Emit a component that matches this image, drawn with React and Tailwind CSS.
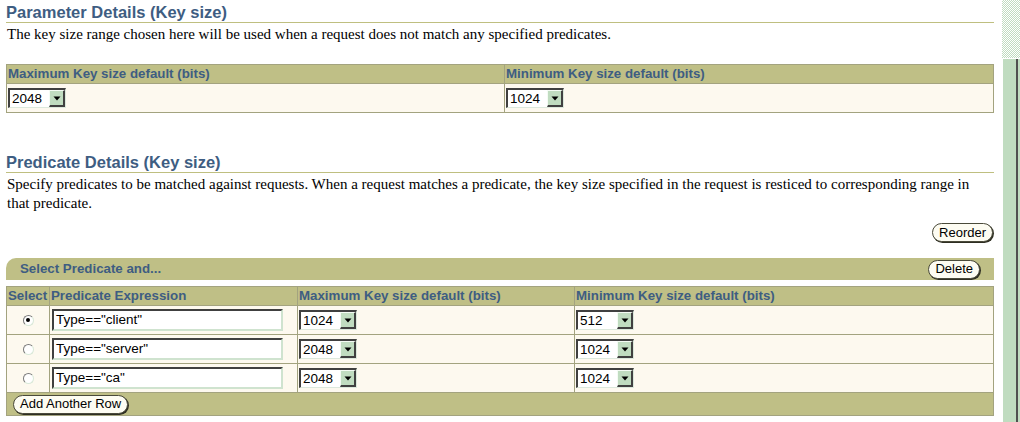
import React from 'react'

const rows = [
  { expr: 'Type=="client"', max: '1024', min: '512', selected: true },
  { expr: 'Type=="server"', max: '2048', min: '1024', selected: false },
  { expr: 'Type=="ca"', max: '2048', min: '1024', selected: false },
]

const Arrow = () => (
  <svg width="8" height="5" viewBox="0 0 8 5">
    <path d="M0.5 0.5 L7.5 0.5 L4 4.5 Z" fill="#000" />
  </svg>
)

// select box drawn like the old motif/windows combo
const KeySelect = ({ value }) => (
  <div className="flex h-[20px] w-[58px] border-l-2 border-t-2 border-l-[#404040] border-t-[#404040] border-r border-b border-r-[#dce8dc] border-b-[#dce8dc] bg-white">
    <span className="flex-1 pl-[2px] text-[13.5px] leading-[17px] text-black">{value}</span>
    <span className="flex w-[16px] items-center justify-center border-l border-t border-l-[#f4fbf4] border-t-[#f4fbf4] border-r-2 border-b-2 border-r-[#404040] border-b-[#404040] bg-[#c0dcc0]">
      <Arrow />
    </span>
  </div>
)

const TextBox = ({ value }) => (
  <div className="h-[22px] w-[231px] border-l-2 border-t-2 border-l-[#404040] border-t-[#404040] border-r-2 border-b-2 border-r-[#cfe3cf] border-b-[#cfe3cf] bg-white pl-[2px] text-[13.5px] leading-[18px] text-black">
    {value}
  </div>
)

const Radio = ({ checked }) => (
  <div className="flex h-[11px] w-[11px] items-center justify-center rounded-full border border-t-[#7a7a7a] border-l-[#7a7a7a] border-b-[#d8e8d8] border-r-[#d8e8d8] bg-white">
    {checked && <div className="h-[4px] w-[4px] rounded-full bg-black" />}
  </div>
)

const PillButton = ({ children }) => (
  <button className="h-[19px] rounded-full border border-[#4a4a3a] bg-[#fdfcf2] px-[6px] text-[13px] leading-[16px] text-black shadow-[1px_1px_0_#2e2e22]">
    {children}
  </button>
)

const Heading = ({ children }) => (
  <div className="h-[23px] border-b border-[#bfbf80] pt-[2px] text-[16.5px] font-bold leading-[20px] text-[#3e5d82]">
    {children}
  </div>
)

const App = () => {
  return (
    <div className="flex h-[422px] w-[1020px] overflow-hidden bg-white font-['Liberation_Sans',Arial,sans-serif]">
      <div className="w-[1002px] pl-[6px] pr-[8px]">
        <Heading>Parameter Details (Key size)</Heading>
        <p className="mt-[2px] pl-[1px] font-['Liberation_Serif','Times_New_Roman',serif] text-[15px] leading-[18px] text-black">
          The key size range chosen here will be used when a request does not match any specified predicates.
        </p>

        <div className="mt-[21px] border border-[#a3a37f]">
          <div className="flex h-[19px] border-b border-[#a3a37f] bg-[#bfbf86] text-[13.3px] font-bold leading-[18px] text-[#3e5d82]">
            <div className="w-[498px] border-r border-[#a3a37f] pl-[1px]">Maximum Key size default (bits)</div>
            <div className="flex-1 pl-[1px]">Minimum Key size default (bits)</div>
          </div>
          <div className="flex h-[28px] bg-[#fdf9ef]">
            <div className="flex w-[498px] items-center border-r border-[#a3a37f] pl-[1px]">
              <KeySelect value="2048" />
            </div>
            <div className="flex flex-1 items-center pl-[1px]">
              <KeySelect value="1024" />
            </div>
          </div>
        </div>

        <div className="mt-[37px]">
          <Heading>Predicate Details (Key size)</Heading>
        </div>
        <p className="mt-[2px] pl-[1px] pr-[4px] font-['Liberation_Serif','Times_New_Roman',serif] text-[15px] leading-[19px] text-black">
          Specify predicates to be matched against requests. When a request matches a predicate, the key size specified in the request is resticed to corresponding range in that predicate.
        </p>

        <div className="mt-[10px] flex justify-end pr-[1px]">
          <PillButton>Reorder</PillButton>
        </div>

        <div className="mt-[16px] flex h-[22px] items-center justify-between rounded-tl-[10px] bg-[#bfbf86] pl-[14px] pr-[14px]">
          <span className="text-[13.3px] font-bold text-[#3e5d82]">Select Predicate and...</span>
          <PillButton>Delete</PillButton>
        </div>

        <div className="mt-[6px] border border-[#a3a37f]">
          <div className="flex h-[19px] border-b border-[#a3a37f] bg-[#bfbf86] text-[13.3px] font-bold leading-[18px] text-[#3e5d82]">
            <div className="w-[43px] border-r border-[#a3a37f] pl-[1px]">Select</div>
            <div className="w-[248px] border-r border-[#a3a37f] pl-[1px]">Predicate Expression</div>
            <div className="w-[277px] border-r border-[#a3a37f] pl-[1px]">Maximum Key size default (bits)</div>
            <div className="flex-1 pl-[1px]">Minimum Key size default (bits)</div>
          </div>
          {rows.map((row) => (
            <div key={row.expr} className="flex h-[29px] border-b border-[#a3a37f] bg-[#fdf9ef]">
              <div className="flex w-[43px] items-center justify-center border-r border-[#a3a37f]">
                <Radio checked={row.selected} />
              </div>
              <div className="flex w-[248px] items-center border-r border-[#a3a37f] pl-[2px]">
                <TextBox value={row.expr} />
              </div>
              <div className="flex w-[277px] items-center border-r border-[#a3a37f] pl-[1px]">
                <KeySelect value={row.max} />
              </div>
              <div className="flex flex-1 items-center pl-[1px]">
                <KeySelect value={row.min} />
              </div>
            </div>
          ))}
          <div className="flex h-[22px] items-center bg-[#bfbf86] pl-[6px]">
            <PillButton>Add Another Row</PillButton>
          </div>
        </div>
      </div>

      {/* scrollbar */}
      <div className="flex w-[18px] flex-col">
        <div className="h-[58px] bg-[image:repeating-conic-gradient(#c0dcc0_0%_25%,#ffffff_0%_50%)] bg-[length:2px_2px]" />
        <div className="flex flex-1 border-l border-t border-white bg-[#c0dcc0]">
          <div className="flex-1 border-r-2 border-[#505050]" />
          <div className="w-[2px]" />
        </div>
      </div>
    </div>
  )
}

export default App
